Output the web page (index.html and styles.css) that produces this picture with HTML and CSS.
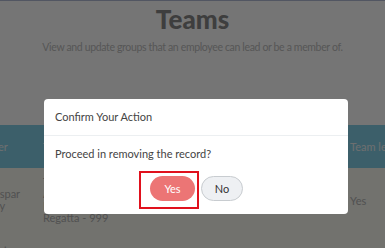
FILE: index.html
```html
<!DOCTYPE html>
<html lang="en">
<head>
    <meta charset="UTF-8">
    <meta name="viewport" content="width=device-width, initial-scale=1.0">
    <title>Teams</title>
    <link rel="stylesheet" href="styles.css">
</head>
<body>
    <div class="page">
        <header class="page-head">
            <h1>Teams</h1>
            <p>View and update groups that an employee can lead or be a member of.</p>
        </header>
        <div class="table-wrap">
            <table class="teams">
                <thead>
                    <tr>
                        <th class="col-member">Member</th>
                        <th class="col-team">Team</th>
                        <th class="col-mid">Role</th>
                        <th class="col-lead">Team lead</th>
                    </tr>
                </thead>
                <tbody>
                    <tr>
                        <td class="col-member">Kaspar<br>Kay</td>
                        <td class="col-team">Team<br>Alpha<br>Beta<br>Regatta - 999</td>
                        <td class="col-mid">Member</td>
                        <td class="col-lead">Yes</td>
                    </tr>
                    <tr class="row-next">
                        <td class="col-member">.</td>
                        <td class="col-team"></td>
                        <td class="col-mid"></td>
                        <td class="col-lead"></td>
                    </tr>
                </tbody>
            </table>
        </div>
    </div>

    <div class="overlay"></div>

    <div class="modal">
        <div class="modal-head">Confirm Your Action</div>
        <div class="modal-body">
            <p>Proceed in removing the record?</p>
            <div class="modal-actions">
                <span class="focus-box"><button class="btn btn-yes">Yes</button></span>
                <button class="btn btn-no">No</button>
            </div>
        </div>
    </div>
</body>
</html>
```

FILE: styles.css
```css
html {
    height: 100%;
    overflow: hidden;
}
body {
    margin: 0;
    padding: 0;
    font-family: Lato, "Open Sans", sans-serif;
    background-color: #fff;
    border-top: 1px solid #b4bcd6;
    height: 247px;
    overflow: hidden;
}
.page-head {
    text-align: center;
    padding-top: 3px;
}
.page-head h1 {
    margin: 0;
    font-size: 26px;
    line-height: 30px;
    font-weight: 900;
    color: #888;
}
.page-head p {
    margin: 6px 0 0;
    font-size: 10.5px;
    line-height: 14px;
    letter-spacing: -0.35px;
    color: #bcbcbc;
}
.table-wrap {
    margin-top: 71px;
    overflow: hidden;
}
.teams {
    border-collapse: collapse;
    margin-left: -40px;
    font-size: 11px;
    color: #b0b0b0;
    table-layout: fixed;
    width: 470px;
}
.teams th {
    background-color: #84cfe6;
    color: #eef2f4;
    font-weight: 400;
    text-align: left;
    height: 43px;
    padding: 0 3px;
}
.teams th.col-member {
    padding-left: 7px;
    width: 70px;
}
.teams td {
    background-color: #f8f8f0;
    vertical-align: top;
    padding: 8px 3px 0;
    line-height: 12px;
}
.teams .col-member {
    width: 74px;
}
.teams td.col-member {
    padding-left: 27px;
    width: 50px;
    padding-top: 20px;
}
.teams .col-team {
    width: 150px;
}
.teams .col-mid {
    width: 145px;
}
.teams td.col-lead {
    padding-top: 27px;
}
.teams .row-next td {
    padding-top: 14px;
    height: 30px;
}
.teams .row-next td.col-member {
    padding-left: 44px;
}

.overlay {
    position: fixed;
    inset: 0;
    background-color: rgba(0, 0, 0, 0.54);
}
.modal {
    position: fixed;
    left: 44px;
    top: 99px;
    width: 304px;
    height: 115px;
    background-color: #fff;
    border-radius: 4px;
    color: #444;
    font-size: 11px;
}
.modal-head {
    padding: 11px 11px 0;
    height: 25px;
    line-height: 14px;
    border-bottom: 1px solid #eceff1;
}
.modal-body {
    padding: 0 11px;
}
.modal-body p {
    margin: 11px 0 0;
    line-height: 14px;
}
.modal-actions {
    display: flex;
    justify-content: center;
    align-items: flex-start;
    gap: 2px;
    margin-top: 10px;
    padding-right: 10px;
}
.focus-box {
    display: flex;
    padding: 3px 2px 6px 9px;
    border: 2px solid #e0111d;
}
.btn {
    display: block;
    box-sizing: border-box;
    height: 25px;
    border-radius: 13px;
    font-family: Lato, "Open Sans", sans-serif;
    font-size: 11px;
    padding: 0;
    cursor: pointer;
}
.btn-yes {
    width: 45px;
    background-color: #ec7575;
    border: 0;
    color: #fff;
}
.btn-no {
    width: 42px;
    margin-top: 5px;
    background-color: #eef0f3;
    border: 1px solid #c8ccd0;
    color: #333;
}
```
